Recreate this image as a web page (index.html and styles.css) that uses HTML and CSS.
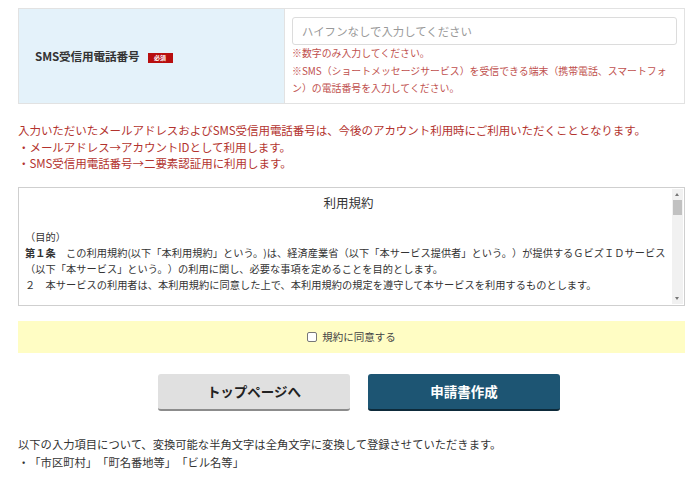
FILE: index.html
```html
<!DOCTYPE html>
<html lang="ja">
<head>
<meta charset="utf-8">
<link rel="stylesheet" href="styles.css">
</head>
<body>
<div class="page">
  <div class="form-table">
    <div class="label-cell">
      <span class="label">SMS受信用電話番号</span>
      <span class="badge">必須</span>
    </div>
    <div class="input-cell">
      <div class="input">ハイフンなしで入力してください</div>
      <p class="note">※数字のみ入力してください。<br>※SMS（ショートメッセージサービス）を受信できる端末（携帯電話、スマートフォン）の電話番号を入力してください。</p>
    </div>
  </div>

  <p class="warn">入力いただいたメールアドレスおよびSMS受信用電話番号は、今後のアカウント利用時にご利用いただくこととなります。<br>・メールアドレス→アカウントIDとして利用します。<br>・SMS受信用電話番号→二要素認証用に利用します。</p>

  <div class="terms">
    <div class="terms-body">
      <h2 class="terms-title">利用規約</h2>
      <p class="terms-text">（目的）<br><span class="art">第１条</span>　この利用規約(以下「本利用規約」という。)は、経済産業省（以下「本サービス提供者」という。）が提供するＧビズＩＤサービス<br>（以下「本サービス」という。）の利用に関し、必要な事項を定めることを目的とします。<br>２　本サービスの利用者は、本利用規約に同意した上で、本利用規約の規定を遵守して本サービスを利用するものとします。</p>
    </div>
    <div class="scrollbar">
      <div class="arrow up"></div>
      <div class="thumb"></div>
      <div class="track"></div>
      <div class="arrow down"></div>
    </div>
  </div>

  <div class="agree">
    <label class="agree-label"><span class="checkbox"></span>規約に同意する</label>
  </div>

  <div class="buttons">
    <div class="btn btn-gray">トップページへ</div>
    <div class="btn btn-blue">申請書作成</div>
  </div>

  <p class="bottom">以下の入力項目について、変換可能な半角文字は全角文字に変換して登録させていただきます。<br>・「市区町村」「町名番地等」「ビル名等」</p>
</div>
</body>
</html>
```

FILE: styles.css
```css
html, body {
  margin: 0;
  padding: 0;
  background: #ffffff;
}
body {
  font-family: "Noto Sans CJK JP", "Noto Sans", sans-serif;
  color: #333;
  text-spacing-trim: space-all;
}
.page {
  padding: 8px 15px 0 18px;
  width: 667px;
}
.form-table {
  display: flex;
  border: 1px solid #e2e2e2;
  height: 94px;
}
.label-cell {
  width: 266px;
  background: #e4f2fa;
  border-right: 1px solid #e2e2e2;
  display: flex;
  align-items: center;
  padding-left: 16px;
  box-sizing: border-box;
}
.label {
  font-size: 11.6px;
  font-weight: bold;
  color: #333;
  letter-spacing: -0.1px;
}
.badge {
  margin-left: 8px;
  background: #b80f0f;
  color: #fff;
  font-size: 6px;
  font-weight: bold;
  width: 25px;
  text-align: center;
  height: 10px;
  line-height: 10px;
  margin-top: 3px;
}
.input-cell {
  flex: 1;
  padding: 8px 7px 0 7px;
}
.input {
  height: 26px;
  border: 1px solid #dcdcdc;
  border-radius: 3px;
  font-size: 11.4px;
  line-height: 26px;
  color: #999;
  padding-left: 9px;
}
.note {
  margin: 0;
  font-size: 9.9px;
  line-height: 17.5px;
  color: #c0504d;
}
.warn {
  margin: 18px 0 0 0;
  font-size: 11.5px;
  line-height: 16.5px;
  color: #b3332e;
  letter-spacing: -0.05px;
}
.terms {
  margin-top: 15px;
  border: 1px solid #cfcfcf;
  height: 117px;
  display: flex;
}
.terms-body {
  flex: 1;
  overflow: hidden;
  padding: 0 0 0 6px;
}
.terms-title {
  margin: 6px 0 0 0;
  text-align: center;
  font-size: 12.5px;
  font-weight: normal;
  color: #333;
  line-height: 18px;
}
.terms-text {
  margin: 17px 0 0 0;
  font-size: 10.2px;
  line-height: 16px;
  color: #333;
  letter-spacing: 0.05px;
  white-space: nowrap;
}
.art {
  font-weight: bold;
}
.scrollbar {
  width: 11px;
  background: #f1f1f1;
  display: flex;
  flex-direction: column;
  margin: 1px 1px 1px 0;
}
.arrow {
  height: 11px;
  position: relative;
}
.arrow::after {
  content: "";
  position: absolute;
  left: 3px;
  border-left: 2.5px solid transparent;
  border-right: 2.5px solid transparent;
}
.arrow.up::after {
  top: 4px;
  border-bottom: 3px solid #777;
}
.arrow.down::after {
  top: 4px;
  border-top: 3px solid #777;
}
.thumb {
  height: 15px;
  background: #c1c1c1;
  margin: 0 1px;
}
.track {
  flex: 1;
}
.agree {
  margin-top: 15px;
  background: #fffdc4;
  height: 32px;
  display: flex;
  align-items: center;
  justify-content: center;
}
.agree-label {
  font-size: 10.5px;
  color: #444;
  display: flex;
  align-items: center;
}
.checkbox {
  width: 8px;
  height: 8px;
  border: 1px solid #777;
  border-radius: 2px;
  background: #fff;
  margin-right: 5px;
}
.buttons {
  margin-top: 21px;
  display: flex;
  justify-content: center;
  gap: 18px;
  padding-left: 15px;
}
.btn {
  width: 192px;
  height: 35px;
  border-radius: 3px;
  display: flex;
  align-items: center;
  justify-content: center;
  font-size: 13.5px;
  font-weight: bold;
}
.btn-gray {
  background: #e0e0e0;
  color: #222;
  border-bottom: 2px solid #8c8c8c;
}
.btn-blue {
  background: #1d5573;
  color: #fff;
  border-bottom: 2px solid #0d2a3a;
}
.bottom {
  margin: 24px 0 0 0;
  font-size: 11.3px;
  line-height: 18px;
  color: #333;
}
```
